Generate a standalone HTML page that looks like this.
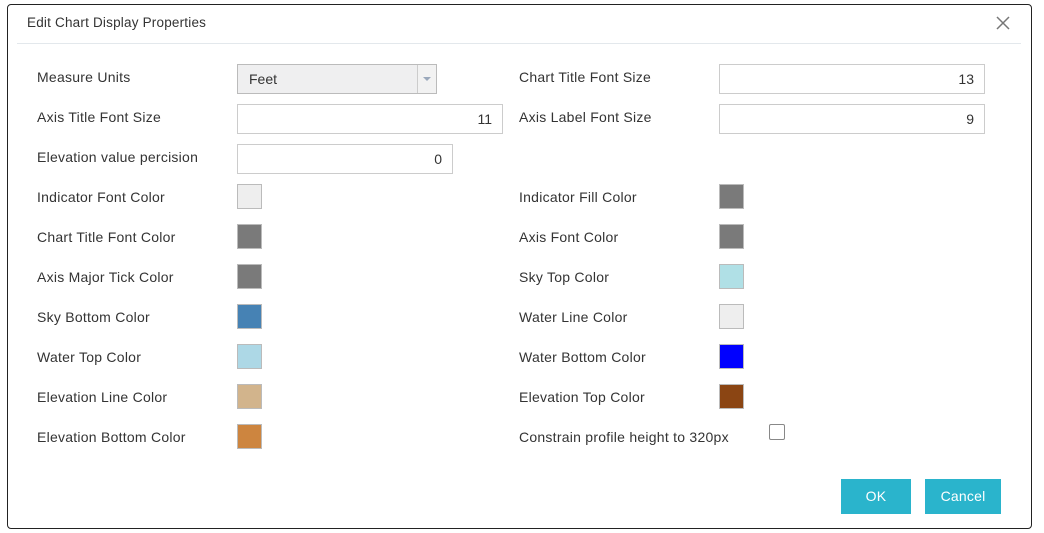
<!DOCTYPE html>
<html><head><style>
*{box-sizing:border-box;margin:0;padding:0}
body{width:1044px;height:533px;background:#fff;font-family:"Liberation Sans",sans-serif;position:relative;overflow:hidden;color:#333}
.dlg{position:absolute;left:7px;top:4px;width:1025px;height:525px;border:1px solid #222;border-radius:4px}
.a{position:absolute}
.t{position:absolute;font-size:14px;letter-spacing:0.25px;color:#333;line-height:16px}
.in{position:absolute;border:1px solid #ccc;background:#fff;font-size:14px;text-align:right;padding-right:10px;line-height:28px}
.sw{position:absolute;width:25px;height:25px;border:1px solid #bbb}
.btn{position:absolute;background:#2ab4cc;color:#fff;font-size:14px;letter-spacing:0.2px;text-align:center;line-height:35px;height:35px}
</style></head><body>
<div class="dlg"></div>
<div class="t" style="left:27px;top:15px;font-size:13.5px;letter-spacing:0.2px">Edit Chart Display Properties</div>
<svg class="a" style="left:996px;top:16px" width="14" height="14" viewBox="0 0 14 14"><path d="M1 1L13 13M13 1L1 13" stroke="#777" stroke-width="1.5"/></svg>
<div class="a" style="left:17px;top:43px;width:1004px;height:1px;background:#e3e8ec"></div>

<div class="t" style="left:37px;top:69px">Measure Units</div>
<div class="a" style="left:237px;top:64px;width:200px;height:30px;border:1px solid #bbb;background:#efeff0;font-size:14px;line-height:28px;padding-left:11px">Feet
<div class="a" style="right:0;top:0;width:19px;height:28px;border-left:1px solid #ccc;background:#f2f2f2"><div class="a" style="left:5px;top:12px;border-left:4px solid transparent;border-right:4px solid transparent;border-top:4px solid #9aa8bb"></div></div></div>
<div class="t" style="left:37px;top:109px">Axis Title Font Size</div>
<div class="in" style="left:237px;top:104px;width:266px;height:30px">11</div>
<div class="t" style="left:37px;top:149px">Elevation value percision</div>
<div class="in" style="left:237px;top:144px;width:216px;height:30px">0</div>

<div class="t" style="left:519px;top:69px">Chart Title Font Size</div>
<div class="in" style="left:719px;top:64px;width:266px;height:30px">13</div>
<div class="t" style="left:519px;top:109px">Axis Label Font Size</div>
<div class="in" style="left:719px;top:104px;width:266px;height:30px">9</div>

<div class="t" style="left:37px;top:189px">Indicator Font Color</div><div class="sw" style="left:237px;top:184px;background:#eeeeee"></div>
<div class="t" style="left:37px;top:229px">Chart Title Font Color</div><div class="sw" style="left:237px;top:224px;background:#7a7a7a"></div>
<div class="t" style="left:37px;top:269px">Axis Major Tick Color</div><div class="sw" style="left:237px;top:264px;background:#7a7a7a"></div>
<div class="t" style="left:37px;top:309px">Sky Bottom Color</div><div class="sw" style="left:237px;top:304px;background:#4682b4"></div>
<div class="t" style="left:37px;top:349px">Water Top Color</div><div class="sw" style="left:237px;top:344px;background:#add8e6"></div>
<div class="t" style="left:37px;top:389px">Elevation Line Color</div><div class="sw" style="left:237px;top:384px;background:#d2b48c"></div>
<div class="t" style="left:37px;top:429px">Elevation Bottom Color</div><div class="sw" style="left:237px;top:424px;background:#cd853f"></div>

<div class="t" style="left:519px;top:189px">Indicator Fill Color</div><div class="sw" style="left:719px;top:184px;background:#7a7a7a"></div>
<div class="t" style="left:519px;top:229px">Axis Font Color</div><div class="sw" style="left:719px;top:224px;background:#7a7a7a"></div>
<div class="t" style="left:519px;top:269px">Sky Top Color</div><div class="sw" style="left:719px;top:264px;background:#b0e0e6"></div>
<div class="t" style="left:519px;top:309px">Water Line Color</div><div class="sw" style="left:719px;top:304px;background:#eeeeee"></div>
<div class="t" style="left:519px;top:349px">Water Bottom Color</div><div class="sw" style="left:719px;top:344px;background:#0000ff"></div>
<div class="t" style="left:519px;top:389px">Elevation Top Color</div><div class="sw" style="left:719px;top:384px;background:#8b4513"></div>
<div class="t" style="left:519px;top:429px">Constrain profile height to 320px</div>
<div class="a" style="left:769px;top:424px;width:16px;height:16px;border:1px solid #888;border-radius:2px"></div>

<div class="btn" style="left:841px;top:479px;width:70px">OK</div>
<div class="btn" style="left:925px;top:479px;width:76px">Cancel</div>
</body></html>
